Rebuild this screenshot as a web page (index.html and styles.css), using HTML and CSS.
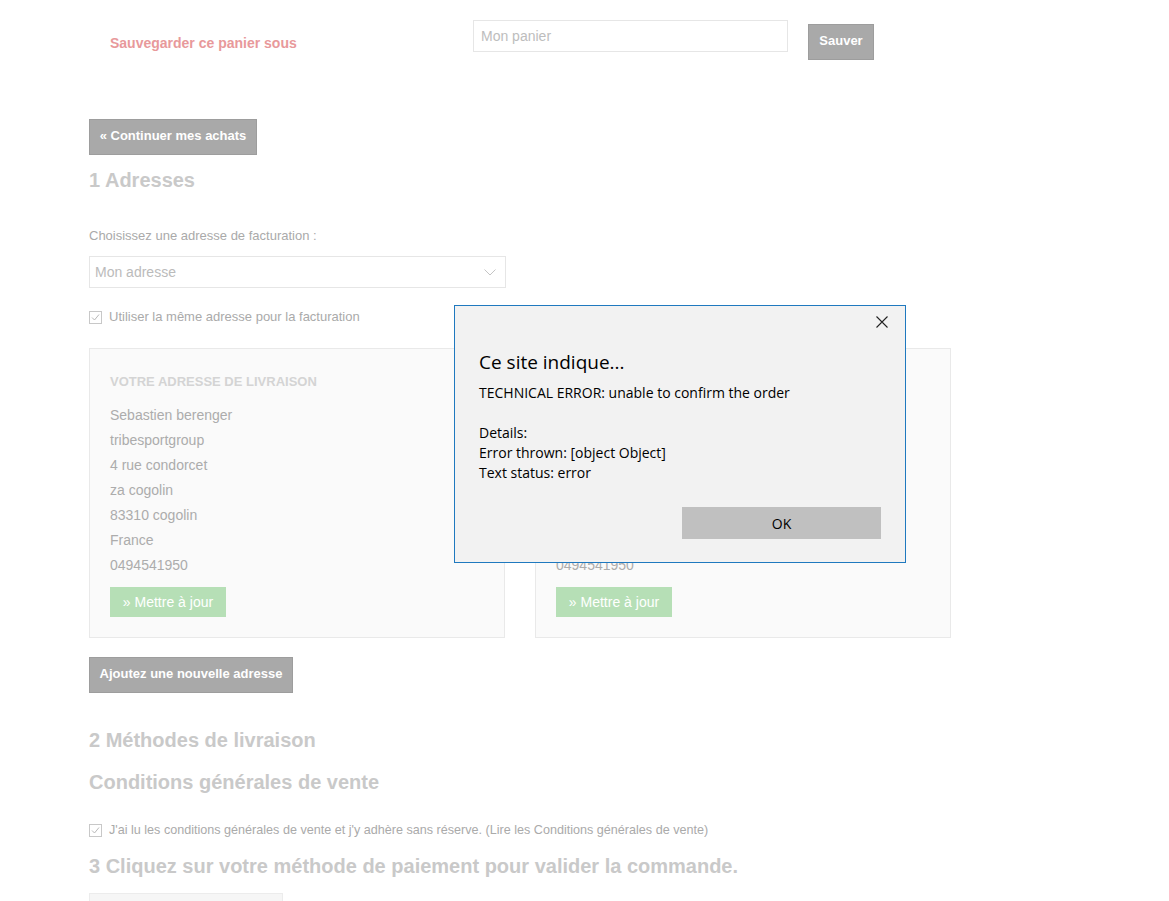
FILE: index.html
```html
<!DOCTYPE html>
<html lang="fr">
<head>
    <meta charset="UTF-8">
    <meta name="viewport" content="width=device-width, initial-scale=1.0">
    <title>Commande</title>
    <link rel="stylesheet" href="styles.css">
</head>
<body>
    <div class="page">
        <div class="save-row">
            <div class="save-label">Sauvegarder ce panier sous</div>
            <input class="save-input" type="text" placeholder="Mon panier">
            <button class="btn btn-save">Sauver</button>
        </div>

        <button class="btn btn-continue">&laquo; Continuer mes achats</button>

        <h2 class="step step-first">1 Adresses</h2>

        <div class="field-label">Choisissez une adresse de facturation :</div>
        <div class="select">
            <span>Mon adresse</span>
            <svg class="chevron" width="12" height="7" viewBox="0 0 12 7"><path d="M0.5 0.5 L6 6 L11.5 0.5" fill="none" stroke="#c4c4c4" stroke-width="1"/></svg>
        </div>

        <label class="check-row same-address">
            <svg class="check" width="13" height="13" viewBox="0 0 13 13"><rect x="0.5" y="0.5" width="12" height="12" fill="#fff" stroke="#c8c8c8"/><path d="M3 6.5 L5.5 9 L10 3.5" fill="none" stroke="#b8b8b8" stroke-width="1"/></svg>
            Utiliser la même adresse pour la facturation
        </label>

        <div class="cards">
            <div class="card">
                <h3 class="card-title">Votre adresse de livraison</h3>
                <ul class="address">
                    <li>Sebastien berenger</li>
                    <li>tribesportgroup</li>
                    <li>4 rue condorcet</li>
                    <li>za cogolin</li>
                    <li>83310 cogolin</li>
                    <li>France</li>
                    <li>0494541950</li>
                </ul>
                <button class="btn-update">&raquo; Mettre à jour</button>
            </div>
            <!-- second card sits under the alert, only its bottom shows -->
            <div class="card">
                <h3 class="card-title covered">Votre adresse de facturation</h3>
                <ul class="address">
                    <li class="covered">Sebastien berenger</li>
                    <li class="covered">tribesportgroup</li>
                    <li class="covered">4 rue condorcet</li>
                    <li class="covered">za cogolin</li>
                    <li class="covered">83310 cogolin</li>
                    <li class="covered">France</li>
                    <li>0494541950</li>
                </ul>
                <button class="btn-update">&raquo; Mettre à jour</button>
            </div>
        </div>

        <button class="btn btn-add">Ajoutez une nouvelle adresse</button>

        <h2 class="step step-delivery">2 Méthodes de livraison</h2>
        <h2 class="step step-cgv">Conditions générales de vente</h2>

        <label class="check-row cgv-row">
            <svg class="check" width="13" height="13" viewBox="0 0 13 13"><rect x="0.5" y="0.5" width="12" height="12" fill="#fff" stroke="#c8c8c8"/><path d="M3 6.5 L5.5 9 L10 3.5" fill="none" stroke="#b8b8b8" stroke-width="1"/></svg>
            J'ai lu les conditions générales de vente et j'y adhère sans réserve. (Lire les Conditions générales de vente)
        </label>

        <h2 class="step step-pay">3 Cliquez sur votre méthode de paiement pour valider la commande.</h2>
        <div class="pay-box"></div>
    </div>

    <div class="dialog">
        <button class="dialog-close" aria-label="Fermer">
            <svg width="12" height="12" viewBox="0 0 12 12"><path d="M0.5 0.5 L11.5 11.5 M11.5 0.5 L0.5 11.5" stroke="#222" stroke-width="1.1"/></svg>
        </button>
        <div class="dialog-title">Ce site indique...</div>
        <div class="dialog-text">
            TECHNICAL ERROR: unable to confirm the order<br>
            <br>
            Details:<br>
            Error thrown: [object Object]<br>
            Text status: error
        </div>
        <div class="dialog-actions">
            <button class="dialog-ok">OK</button>
        </div>
    </div>
</body>
</html>
```

FILE: styles.css
```css
body {
    margin: 0;
    font-family: "Liberation Sans", Arial, sans-serif;
    background: #fff;
    color: #aaa;
    overflow: hidden;
    height: 901px;
}

.page {
    margin-left: 89px;
    width: 862px;
}

.save-row {
    display: flex;
    align-items: flex-start;
    padding-top: 20px;
}

.save-label {
    width: 384px;
    box-sizing: border-box;
    padding-left: 21px;
    margin-top: 15px;
    font-size: 14px;
    line-height: 16px;
    font-weight: bold;
    color: #e8999b;
}

.save-input {
    width: 315px;
    height: 32px;
    box-sizing: border-box;
    border: 1px solid #e6e6e6;
    padding: 0 7px;
    font-family: "Liberation Sans", Arial, sans-serif;
    font-size: 14px;
    color: #bbb;
    outline: none;
}

.save-input::placeholder {
    color: #bdbdbd;
}

.btn {
    display: block;
    background-color: #a9a9a9;
    border: 1px solid #9d9d9d;
    color: #fff;
    font-family: "Liberation Sans", Arial, sans-serif;
    font-weight: bold;
    font-size: 13px;
    padding: 0 0 3px;
    cursor: pointer;
}

.btn-save {
    width: 66px;
    height: 36px;
    margin-left: 20px;
    margin-top: 4px;
}

.btn-continue {
    margin-top: 59px;
    width: 168px;
    height: 36px;
}

.step {
    margin: 0;
    font-size: 20px;
    line-height: 24px;
    font-weight: bold;
    color: #c9c9c9;
}

.step-first {
    margin-top: 13px;
}

.field-label {
    margin-top: 36px;
    font-size: 13px;
    line-height: 16px;
    color: #aaa;
}

.select {
    margin-top: 12px;
    width: 417px;
    height: 32px;
    box-sizing: border-box;
    border: 1px solid #e6e6e6;
    display: flex;
    align-items: center;
    justify-content: space-between;
    padding: 0 9px 0 5px;
    font-size: 14px;
    color: #bbb;
}

.check-row {
    display: flex;
    align-items: center;
    gap: 7px;
    font-size: 13px;
    line-height: 16px;
    color: #aaa;
}

.same-address {
    margin-top: 21px;
}

.cards {
    display: flex;
    gap: 30px;
    margin-top: 23px;
}

.card {
    width: 416px;
    height: 290px;
    box-sizing: border-box;
    background: #fafafa;
    border: 1px solid #e9e9e9;
    padding: 25px 20px 0;
}

.card-title {
    margin: 0;
    font-size: 13px;
    line-height: 16px;
    font-weight: bold;
    text-transform: uppercase;
    color: #d4d4d4;
}

.address {
    list-style: none;
    margin: 13px 0 0;
    padding: 0;
    font-size: 14px;
    line-height: 25px;
    color: #acacac;
}

.covered {
    visibility: hidden;
}

.btn-update {
    display: block;
    margin-top: 9px;
    width: 116px;
    height: 30px;
    background: #b6dfb6;
    border: none;
    color: #fff;
    font-family: "Liberation Sans", Arial, sans-serif;
    font-size: 14px;
    padding: 0;
}

.btn-add {
    margin-top: 19px;
    width: 204px;
    height: 36px;
}

.step-delivery {
    margin-top: 35px;
}

.step-cgv {
    margin-top: 18px;
}

.cgv-row {
    margin-top: 28px;
    font-size: 12.6px;
}

.step-pay {
    margin-top: 16px;
}

.pay-box {
    margin-top: 15px;
    width: 194px;
    height: 30px;
    box-sizing: border-box;
    background: #f6f6f6;
    border: 1px solid #ececec;
}

/* alert box on top of the page */
.dialog {
    position: absolute;
    left: 454px;
    top: 305px;
    width: 452px;
    height: 258px;
    box-sizing: border-box;
    background: #f2f2f2;
    border: 1px solid #1f79bf;
    padding: 43px 24px 0 24px;
    font-family: "Open Sans", "Noto Sans", sans-serif;
    color: #000;
}

.dialog-close {
    position: absolute;
    top: 10px;
    right: 17px;
    border: none;
    background: none;
    padding: 0;
    width: 12px;
    height: 12px;
    display: flex;
}

.dialog-title {
    font-size: 19px;
    line-height: 26px;
}

.dialog-text {
    margin-top: 8px;
    font-size: 14px;
    line-height: 20px;
}

.dialog-actions {
    display: flex;
    justify-content: flex-end;
    margin-top: 24px;
}

.dialog-ok {
    width: 199px;
    height: 32px;
    background: #c0c0c0;
    border: none;
    font-family: "Open Sans", "Noto Sans", sans-serif;
    font-size: 14px;
    color: #000;
    padding: 0;
}
```
